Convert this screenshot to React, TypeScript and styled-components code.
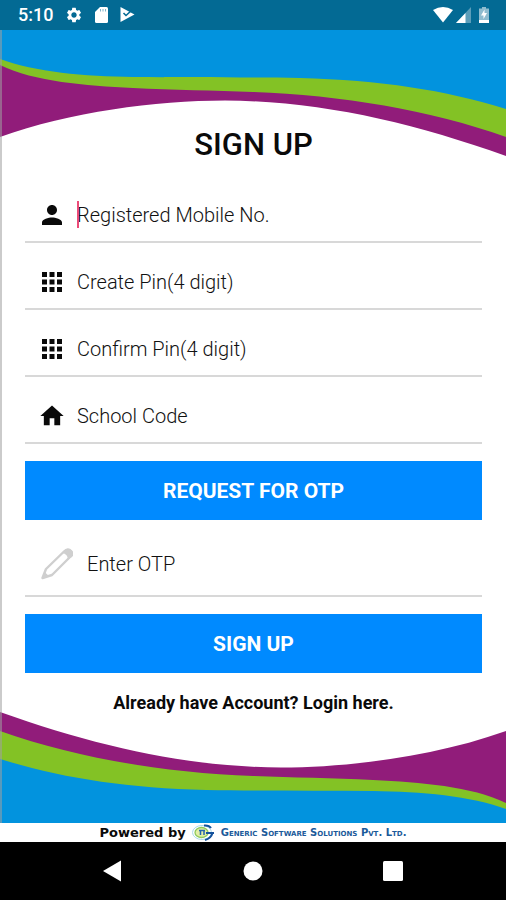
import React from "react";
import styled, { createGlobalStyle, css } from "styled-components";
import { MdApps, MdHome, MdPerson, MdSettings } from "react-icons/md";

const GlobalStyle = createGlobalStyle`
  * { box-sizing: border-box; }
  body { margin: 0; background: #fff; font-family: Roboto, sans-serif; color: #0a0a0a; }
`;

const Screen = styled.div`
  display: flex;
  flex-direction: column;
  min-height: 100vh;
`;

const StatusBar = styled.header`
  display: flex;
  align-items: center;
  justify-content: space-between;
  height: 30px;
  padding: 0 17px 0 18px;
  background: #036a94;
  color: #fff;
`;

const StatusGroup = styled.div<{ $gap: number }>`
  display: flex;
  align-items: center;
  gap: ${(p) => p.$gap}px;
  svg { display: block; }
`;

const Clock = styled.time`
  font-size: 18px;
  font-weight: 500;
  line-height: 30px;
`;

const Stage = styled.main`
  flex: 1;
  display: grid;
`;

const Backdrop = styled.div`
  grid-area: 1 / 1;
  display: flex;
  flex-direction: column;
  justify-content: space-between;
`;

const WaveSvg = styled.svg<{ $height: number }>`
  display: block;
  width: 100%;
  height: ${(p) => p.$height}px;
`;

const Form = styled.form`
  grid-area: 1 / 1;
  z-index: 1;
  display: flex;
  flex-direction: column;
  padding: 95px 24px 0 23px;
  border-left: 2px solid rgba(160, 160, 160, 0.55);
`;

const Title = styled.h1`
  margin: 0 0 24px;
  font-size: 31px;
  line-height: 40px;
  font-weight: 500;
  text-align: center;
`;

const Field = styled.label<{ $tall?: boolean }>`
  display: flex;
  align-items: center;
  gap: 10px;
  height: ${(p) => (p.$tall ? 77 : 67)}px;
  padding: 13px 0 0 12px;
  border-bottom: 2px solid #d8d8d8;
  &:first-of-type { height: 54px; padding-top: 0; }
`;

const IconBox = styled.span<{ $wide?: boolean }>`
  display: flex;
  justify-content: center;
  flex: none;
  width: ${(p) => (p.$wide ? 40 : 30)}px;
`;

const InputBox = styled.span`
  position: relative;
  display: flex;
  flex: 1;
`;

const Caret = styled.span`
  position: absolute;
  left: 0;
  top: 0;
  width: 2px;
  height: 27px;
  background: #ec4b78;
`;

const TextInput = styled.input`
  flex: 1;
  min-width: 0;
  height: 28px;
  padding: 0;
  border: 0;
  outline: 0;
  background: transparent;
  font: 300 20px/28px Roboto, sans-serif;
  color: #111;
  &::placeholder { color: #111; opacity: 1; }
`;

const ActionButton = styled.button`
  height: 59px;
  margin: 17px 0 0;
  border: 0;
  background: #008aff;
  color: #fff;
  font: 700 21px/28px Roboto, sans-serif;
  cursor: pointer;
`;

const LoginLink = styled.a`
  align-self: center;
  margin: 18px 0 0;
  font-size: 18px;
  line-height: 24px;
  font-weight: 700;
  color: #0a0a0a;
  text-decoration: none;
`;

const Credit = styled.footer`
  display: flex;
  align-items: center;
  justify-content: center;
  gap: 6px;
  height: 19px;
  background: #fff;
  white-space: nowrap;
`;

const creditFont = css`
  font-family: "DejaVu Sans", sans-serif;
  font-weight: 700;
  line-height: 18px;
`;

const PoweredBy = styled.span`
  ${creditFont}
  font-size: 13px;
`;

const Company = styled.span`
  ${creditFont}
  font-size: 10px;
  font-variant: small-caps;
  color: #1b5a9a;
`;

const NavBar = styled.nav`
  display: flex;
  justify-content: center;
  align-items: center;
  gap: 100px;
  height: 58px;
  background: #000;
`;

const NavButton = styled.button`
  display: flex;
  align-items: center;
  justify-content: center;
  width: 40px;
  height: 40px;
  padding: 0;
  border: 0;
  background: transparent;
  cursor: pointer;
`;

function Bands() {
  return (
    <>
      <path
        fill="#911c7a"
        d="M0 0H506V126C410 92 320 71 225 70.500C155 70.500 70 82 0 107Z"
      />
      <path
        fill="#83c225"
        d="M0 0H506V107C430 80 340 65 253 62C215 60.500 173 60 133 58C85 55.500 35 52 0 35Z"
      />
      <path
        fill="#0293de"
        d="M0 0H506V79C445 60 380 50 300 48C250 47 190 47.500 133 47C85 46.500 35 42 0 29Z"
      />
    </>
  );
}

function Waves({ flipped }: { flipped?: boolean }) {
  const height = flipped ? 115 : 130;
  return (
    <WaveSvg $height={height} viewBox={`0 0 506 ${height}`} preserveAspectRatio="none" aria-hidden>
      {flipped ? (
        <g transform="rotate(180 253 65)">
          <Bands />
        </g>
      ) : (
        <Bands />
      )}
    </WaveSvg>
  );
}

const SdCard = () => (
  <svg width="13" height="16" viewBox="0 0 13 16" aria-hidden>
    <path fill="#fff" d="M5 0h6.500Q13 0 13 1.500v13Q13 16 11.500 16h-10Q0 16 0 14.500V5z" />
    <path stroke="#7fb2c8" strokeWidth="1" d="M5.500 2v2.500M8 2v2.500M10.500 2v2.500" />
  </svg>
);

const PlayCheck = () => (
  <svg width="15" height="16" viewBox="0 0 15 16" aria-hidden>
    <path fill="#fff" d="M.5 0 14.500 7.500.5 15z" />
    <path fill="none" stroke="#036a94" strokeWidth="1.600" d="m3.500 6 2.500 2.500L12 3" />
  </svg>
);

const Wifi = () => (
  <svg width="20" height="16" viewBox="0 0 20 16" aria-hidden>
    <path fill="#fff" d="M0 3Q10-3 20 3L10 15.500z" />
  </svg>
);

const Signal = () => (
  <svg width="15" height="16" viewBox="0 0 15 16" aria-hidden>
    <path fill="#5b9db9" d="M15 0v16H0z" />
    <path fill="#fff" d="M9.500 6v10H0z" />
  </svg>
);

const Battery = () => (
  <svg width="10" height="16" viewBox="0 0 10 16" aria-hidden>
    <path fill="#8fbccf" d="M3 0h4v1.500h3V16H0V1.500h3z" />
    <path fill="#fff" d="M0 13h10v3H0zM5.500 2.500 2 8.500h2.500v3.500l3.500-6H5.500z" />
  </svg>
);

const Pencil = () => (
  <svg width="32" height="32" viewBox="0 0 32 32" aria-hidden>
    <path
      fill="#fff"
      stroke="#cfcfcf"
      strokeWidth="2.400"
      strokeLinejoin="round"
      d="M1.500 30 5 21 23 3.500Q27-.5 30 3T29 9L11 27z"
    />
    <path fill="#cfcfcf" d="M21 5 25 1.500Q29 0 31 3T30 9l-3 3Q27 6 21 5ZM1 31l2.500-7 4.500 4z" />
  </svg>
);

const CompanyLogo = () => (
  <svg width="23" height="17" viewBox="0 0 23 17" aria-hidden>
    <ellipse cx="10" cy="8.500" rx="9.500" ry="7" fill="none" stroke="#a9d9ea" />
    <ellipse cx="9.500" cy="8.500" rx="6.500" ry="5" fill="#e3efa5" stroke="#8cc95c" strokeWidth="1.300" />
    <path fill="none" stroke="#2467ad" strokeWidth="1.500" d="M7 6.500h6M8.500 6v5M12 6v5" />
    <path fill="none" stroke="#14519c" strokeWidth="2" d="M12 1.500Q17 1 19 4M14 9h8M20.500 9Q19 14.500 13 16" />
  </svg>
);

type FieldData = { name: string; label: string; icon: React.ReactNode; focused?: boolean; type?: string };

const fields: FieldData[] = [
  { name: "mobile", label: "Registered Mobile No.", icon: <MdPerson size={30} />, focused: true, type: "tel" },
  { name: "pin", label: "Create Pin(4 digit)", icon: <MdApps size={30} />, type: "password" },
  { name: "confirm", label: "Confirm Pin(4 digit)", icon: <MdApps size={30} />, type: "password" },
  { name: "school", label: "School Code", icon: <MdHome size={28} /> },
];

export default function App() {
  return (
    <Screen>
      <GlobalStyle />
      <StatusBar>
        <StatusGroup $gap={12}>
          <Clock>5:10</Clock>
          <MdSettings size={18} />
          <SdCard />
          <PlayCheck />
        </StatusGroup>
        <StatusGroup $gap={3}>
          <Wifi />
          <StatusGroup $gap={8}>
            <Signal />
            <Battery />
          </StatusGroup>
        </StatusGroup>
      </StatusBar>
      <Stage>
        <Backdrop>
          <Waves />
          <Waves flipped />
        </Backdrop>
        <Form onSubmit={(e) => e.preventDefault()}>
          <Title>SIGN UP</Title>
          {fields.map((f) => (
            <Field key={f.name}>
              <IconBox>{f.icon}</IconBox>
              <InputBox>
                <TextInput name={f.name} type={f.type ?? "text"} placeholder={f.label} aria-label={f.label} />
                {f.focused && <Caret />}
              </InputBox>
            </Field>
          ))}
          <ActionButton type="button">REQUEST FOR OTP</ActionButton>
          <Field $tall>
            <IconBox $wide>
              <Pencil />
            </IconBox>
            <InputBox>
              <TextInput name="otp" placeholder="Enter OTP" aria-label="Enter OTP" />
            </InputBox>
          </Field>
          <ActionButton type="submit">SIGN UP</ActionButton>
          <LoginLink href="#login">Already have Account? Login here.</LoginLink>
        </Form>
      </Stage>
      <Credit>
        <PoweredBy>Powered by</PoweredBy>
        <CompanyLogo />
        <Company>Generic Software Solutions Pvt. Ltd.</Company>
      </Credit>
      <NavBar>
        <NavButton aria-label="Back">
          <svg width="20" height="22" viewBox="0 0 20 22">
            <path fill="#fff" d="M0 11 18 .5v21z" />
          </svg>
        </NavButton>
        <NavButton aria-label="Home">
          <svg width="20" height="20" viewBox="0 0 20 20">
            <circle cx="10" cy="10" r="9.500" fill="#fff" />
          </svg>
        </NavButton>
        <NavButton aria-label="Recent apps">
          <svg width="20" height="20" viewBox="0 0 20 20">
            <rect width="20" height="20" rx="1.500" fill="#fff" />
          </svg>
        </NavButton>
      </NavBar>
    </Screen>
  );
}
